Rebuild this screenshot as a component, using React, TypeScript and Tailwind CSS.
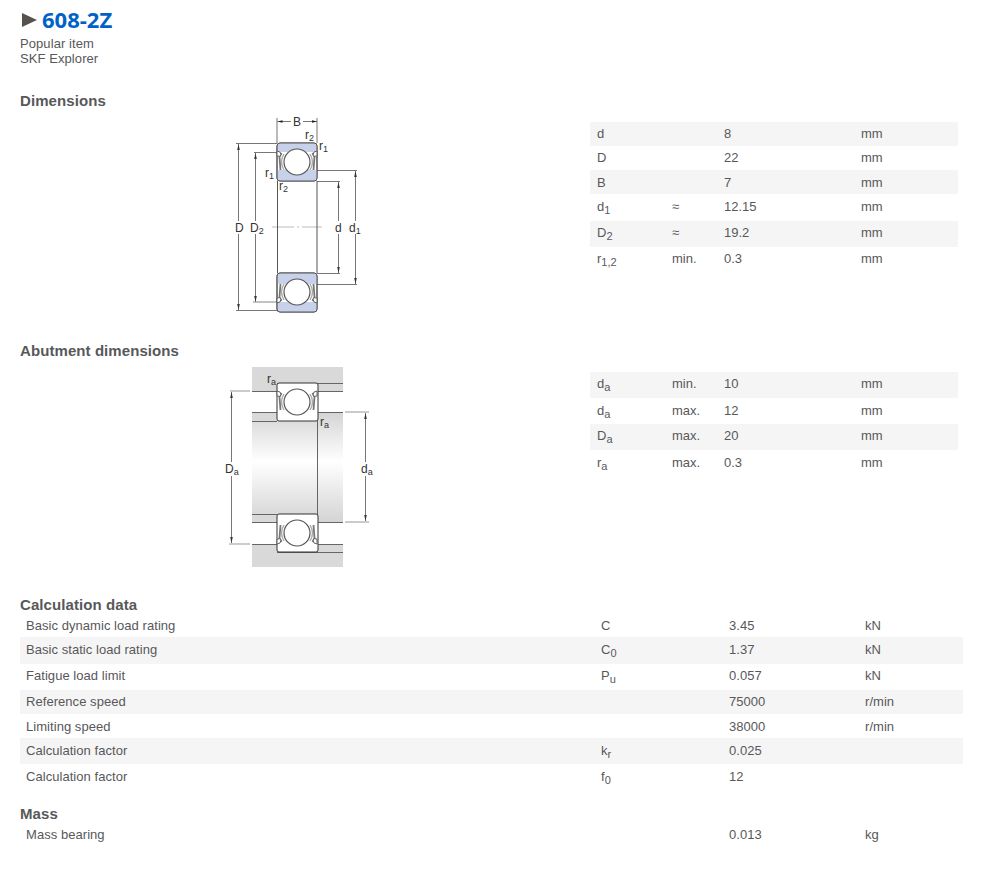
import type { ReactNode } from 'react';

type SpecRow = {
  symbol?: ReactNode;
  qualifier?: string;
  value: string;
  unit: string;
  height: string;
};

type CalcRow = {
  label: string;
  symbol?: ReactNode;
  value: string;
  unit?: string;
  height: string;
};

const dimensions: SpecRow[] = [
  { symbol: 'd', value: '8', unit: 'mm', height: 'h-[24px] pt-[4px]' },
  { symbol: 'D', value: '22', unit: 'mm', height: 'h-[24px] pt-[4px]' },
  { symbol: 'B', value: '7', unit: 'mm', height: 'h-[24px] pt-[5px]' },
  { symbol: <>d<sub>1</sub></>, qualifier: '≈', value: '12.15', unit: 'mm', height: 'h-[27px] pt-[5px]' },
  { symbol: <>D<sub>2</sub></>, qualifier: '≈', value: '19.2', unit: 'mm', height: 'h-[26px] pt-[4px]' },
  { symbol: <>r<sub>1,2</sub></>, qualifier: 'min.', value: '0.3', unit: 'mm', height: 'h-[26px] pt-[4px]' },
];

const abutment: SpecRow[] = [
  { symbol: <>d<sub>a</sub></>, qualifier: 'min.', value: '10', unit: 'mm', height: 'h-[26px] pt-[4px]' },
  { symbol: <>d<sub>a</sub></>, qualifier: 'max.', value: '12', unit: 'mm', height: 'h-[26px] pt-[5px]' },
  { symbol: <>D<sub>a</sub></>, qualifier: 'max.', value: '20', unit: 'mm', height: 'h-[26px] pt-[4px]' },
  { symbol: <>r<sub>a</sub></>, qualifier: 'max.', value: '0.3', unit: 'mm', height: 'h-[26px] pt-[5px]' },
];

const calculation: CalcRow[] = [
  { label: 'Basic dynamic load rating', symbol: 'C', value: '3.45', unit: 'kN', height: 'h-[24px] pt-[5px]' },
  { label: 'Basic static load rating', symbol: <>C<sub>0</sub></>, value: '1.37', unit: 'kN', height: 'h-[27px] pt-[5px]' },
  { label: 'Fatigue load limit', symbol: <>P<sub>u</sub></>, value: '0.057', unit: 'kN', height: 'h-[26px] pt-[4px]' },
  { label: 'Reference speed', value: '75000', unit: 'r/min', height: 'h-[24px] pt-[4px]' },
  { label: 'Limiting speed', value: '38000', unit: 'r/min', height: 'h-[24px] pt-[5px]' },
  { label: 'Calculation factor', symbol: <>k<sub>r</sub></>, value: '0.025', height: 'h-[26px] pt-[5px]' },
  { label: 'Calculation factor', symbol: <>f<sub>0</sub></>, value: '12', height: 'h-[26px] pt-[5px]' },
];

function Heading({ children, className }: { children: ReactNode; className: string }) {
  return <h2 className={`h-[17px] text-[15px] leading-[17px] font-bold tracking-[0.08px] ${className}`}>{children}</h2>;
}

function SpecTable({ rows, className }: { rows: SpecRow[]; className: string }) {
  return (
    <div className={className}>
      {rows.map((row, i) => (
        <div
          key={i}
          className={`grid grid-cols-[75px_52px_137px_1fr] pl-[7px] [&_sub]:text-[11px] [&_sub]:bottom-[-3px] ${row.height} ${i % 2 === 0 ? 'bg-[#f5f5f5]' : ''}`}
        >
          <span>{row.symbol}</span>
          <span>{row.qualifier}</span>
          <span>{row.value}</span>
          <span>{row.unit}</span>
        </div>
      ))}
    </div>
  );
}

function CalcLine({ row, shaded }: { row: CalcRow; shaded: boolean }) {
  return (
    <div className={`grid grid-cols-[575px_128px_136px_1fr] pl-[6px] tracking-[0.05px] [&_sub]:text-[11px] [&_sub]:bottom-[-3px] ${row.height} ${shaded ? 'bg-[#f5f5f5]' : ''}`}>
      <span>{row.label}</span>
      <span>{row.symbol}</span>
      <span>{row.value}</span>
      <span>{row.unit}</span>
    </div>
  );
}

// ball and shields, drawn around the ball centre
function BallSet({ x, y, flip = false }: { x: number; y: number; flip?: boolean }) {
  const s = flip ? -1 : 1;
  return (
    <g transform={`translate(${x} ${y}) scale(1 ${s})`}>
      <path d="M-15.5 -9 L-17.5 -5 L-16.5 8 M15.5 -9 L17.5 -5 L16.5 8" fill="none" stroke="#777" strokeWidth="1.8" />
      <path d="M-20 -11 Q-16 -11 -16 -7 Q-17 -5 -20 -6 Z M20 -11 Q16 -11 16 -7 Q17 -5 20 -6 Z" fill="#fff" stroke="#555" strokeWidth="0.9" />
      <path d="M-13 -8 Q-18 0 -13 8 M13 -8 Q18 0 13 8" fill="none" stroke="#aaa" strokeWidth="1.4" />
      <circle r="13" fill="#fff" stroke="#555" strokeWidth="1.2" />
    </g>
  );
}

function Arrow({ x, y, down = false }: { x: number; y: number; down?: boolean }) {
  const d = down ? -1 : 1;
  return <path d={`M${x} ${y} L${x - 1.3} ${y + 6 * d} L${x + 1.3} ${y + 6 * d} Z`} fill="#333" />;
}

function DimensionsDrawing() {
  const sans = { fontFamily: '"Liberation Sans", Arial, sans-serif' };
  return (
    <svg width="140" height="200" viewBox="225 115 140 200" className="ml-[205px] block" style={sans}>
      {/* extension lines */}
      <g stroke="#777" strokeWidth="1" fill="none">
        <path d="M277 118V143M317 118V143" />
        <path d="M277.5 121.5H291M303 121.5H317" />
        <path d="M236 143.5H277M254 152.5H277M317 170.5H357M317 181.5H340" />
        <path d="M236 310.5H277M317 273.5H340M317 284.5H357" />
        <path d="M238.5 144V221M238.5 234V310M255.5 153V221M255.5 234V302M338.5 182V221M338.5 234V273M355.5 171V221M355.5 234V284" />
      </g>
      <path d="M253 302H277" stroke="#aaa" strokeWidth="1.4" />
      <path d="M272 227H294M297 227H299M302 227H322" stroke="#aaa" strokeWidth="0.8" />
      <path d="M277.5 181V273M317 181V273" stroke="#444" strokeWidth="0.9" />
      <path d="M277.5 121.5l5 -1.2v2.4zM317 121.5l-5 -1.2v2.4z" fill="#222" />
      <Arrow x={238.5} y={144} />
      <Arrow x={238.5} y={310} down />
      <Arrow x={255.5} y={153} />
      <Arrow x={255.5} y={302} down />
      <Arrow x={338.5} y={182} />
      <Arrow x={338.5} y={273} down />
      <Arrow x={355.5} y={171} />
      <Arrow x={355.5} y={284} down />
      {/* top section */}
      <rect x="277" y="143" width="40" height="38" rx="3" fill="#fff" stroke="#555" />
      <path d="M277.5 146a3 3 0 0 1 3 -3H314a3 3 0 0 1 3 3V152H277.5Z" fill="#c7d1e9" />
      <path d="M277.5 170H317V178a3 3 0 0 1 -3 3H280.5a3 3 0 0 1 -3 -3Z" fill="#c7d1e9" />
      <rect x="277" y="143" width="40" height="38" rx="3" fill="none" stroke="#555" />
      <BallSet x={297} y={162} />
      {/* bottom section */}
      <rect x="277" y="273" width="40" height="39" rx="3" fill="#fff" stroke="#555" />
      <path d="M277.5 276a3 3 0 0 1 3 -3H314a3 3 0 0 1 3 3V284H277.5Z" fill="#c7d1e9" />
      <path d="M277.5 302H317V309a3 3 0 0 1 -3 3H280.5a3 3 0 0 1 -3 -3Z" fill="#c7d1e9" />
      <rect x="277" y="273" width="40" height="39" rx="3" fill="none" stroke="#555" />
      <BallSet x={297} y={292} flip />
      <g fontSize="12" fill="#333">
        <text x="293" y="126">B</text>
        <text x="305" y="139">r<tspan fontSize="9" dy="2">2</tspan></text>
        <text x="319" y="150">r<tspan fontSize="9" dy="2">1</tspan></text>
        <text x="265" y="177">r<tspan fontSize="9" dy="2">1</tspan></text>
        <text x="279" y="190">r<tspan fontSize="9" dy="2">2</tspan></text>
        <text x="235" y="232">D</text>
        <text x="250" y="232">D<tspan fontSize="9" dy="2">2</tspan></text>
        <text x="335" y="232">d</text>
        <text x="349" y="232">d<tspan fontSize="9" dy="2">1</tspan></text>
      </g>
    </svg>
  );
}

function AbutmentDrawing() {
  return (
    <svg
      width="160"
      height="215"
      viewBox="220 360 160 215"
      className="ml-[200px] block"
      style={{ fontFamily: '"Liberation Sans", Arial, sans-serif' }}
    >
      <defs>
        <linearGradient id="shaft" x1="0" y1="0" x2="0" y2="1">
          <stop offset="0" stopColor="#d4d4d4" />
          <stop offset="0.45" stopColor="#ffffff" />
          <stop offset="1" stopColor="#d4d4d4" />
        </linearGradient>
      </defs>
      {/* housing */}
      <rect x="252" y="367" width="91" height="24" fill="#d9d9d9" />
      <rect x="252" y="544" width="91" height="23" fill="#d9d9d9" />
      {/* shaft */}
      <rect x="252" y="412" width="91" height="110" fill="url(#shaft)" />
      <rect x="252" y="412" width="25" height="9" fill="#d9d9d9" />
      <rect x="252" y="514" width="25" height="8" fill="#d9d9d9" />
      <path d="M317.5 412V522" stroke="#555" strokeWidth="0.9" />
      <g stroke="#666" strokeWidth="1.2" fill="none">
        <path d="M277 383.5H343M252 391.5H277M317 391.5H343" />
        <path d="M252 412.5H343M252 421.5H277" />
        <path d="M252 514.5H277M252 522.5H343" />
        <path d="M252 544.5H343M277 552.5H343" />
      </g>
      {/* bearing */}
      <rect x="277" y="383" width="41" height="38" rx="2" fill="#fff" stroke="#333" />
      <BallSet x={297} y={402} />
      <rect x="277" y="514" width="41" height="38" rx="2" fill="#fff" stroke="#333" />
      <BallSet x={297} y={533} flip />
      {/* dimension lines */}
      <path d="M230 391H250M229 544H250M345 412H369M345 522H369" stroke="#bbb" strokeWidth="1.4" fill="none" />
      <path d="M231.5 392V462M231.5 476V543M365.5 413V462M365.5 476V521" stroke="#777" strokeWidth="1" fill="none" />
      <Arrow x={231.5} y={392} />
      <Arrow x={231.5} y={543} down />
      <Arrow x={365.5} y={413} />
      <Arrow x={365.5} y={521} down />
      <g fontSize="12" fill="#333">
        <text x="267" y="383">r<tspan fontSize="9" dy="2">a</tspan></text>
        <text x="320" y="426">r<tspan fontSize="9" dy="2">a</tspan></text>
        <text x="225" y="473">D<tspan fontSize="9" dy="2">a</tspan></text>
        <text x="361" y="473">d<tspan fontSize="9" dy="2">a</tspan></text>
      </g>
    </svg>
  );
}

export default function App() {
  return (
    <div className="w-[963px] min-h-[869px] pl-[20px] pt-[8px] bg-white text-[#58585a] text-[13px] leading-[16px] font-['Liberation_Sans',Arial,sans-serif]">
      <h1 className="flex items-center h-[22px] text-[#0062c8] text-[22px] leading-[22px] font-['Open_Sans',sans-serif] font-bold">
        <svg width="15" height="14" viewBox="0 0 15 14" className="ml-[2px] mr-[5px] mt-[2px]">
          <path d="M0 0L15 7L0 14Z" fill="#57524f" />
        </svg>
        608-2Z
      </h1>
      <div className="mt-[6px] leading-[15px] tracking-[0.08px]">
        <div>Popular item</div>
        <div>SKF Explorer</div>
      </div>

      <Heading className="mt-[26px]">Dimensions</Heading>
      <div className="grid grid-cols-[570px_368px] mt-[6px]">
        <DimensionsDrawing />
        <SpecTable rows={dimensions} className="mt-[7px]" />
      </div>

      <Heading className="mt-[27px]">Abutment dimensions</Heading>
      <div className="grid grid-cols-[570px_368px] mt-[1px]">
        <AbutmentDrawing />
        <SpecTable rows={abutment} className="mt-[12px]" />
      </div>

      <Heading className="mt-[21px]">Calculation data</Heading>
      <div>
        {calculation.map((row, i) => (
          <CalcLine key={i} row={row} shaded={i % 2 === 1} />
        ))}
      </div>

      <Heading className="mt-[15px]">Mass</Heading>
      <CalcLine row={{ label: 'Mass bearing', value: '0.013', unit: 'kg', height: 'h-[24px] pt-[5px]' }} shaded={false} />
    </div>
  );
}
